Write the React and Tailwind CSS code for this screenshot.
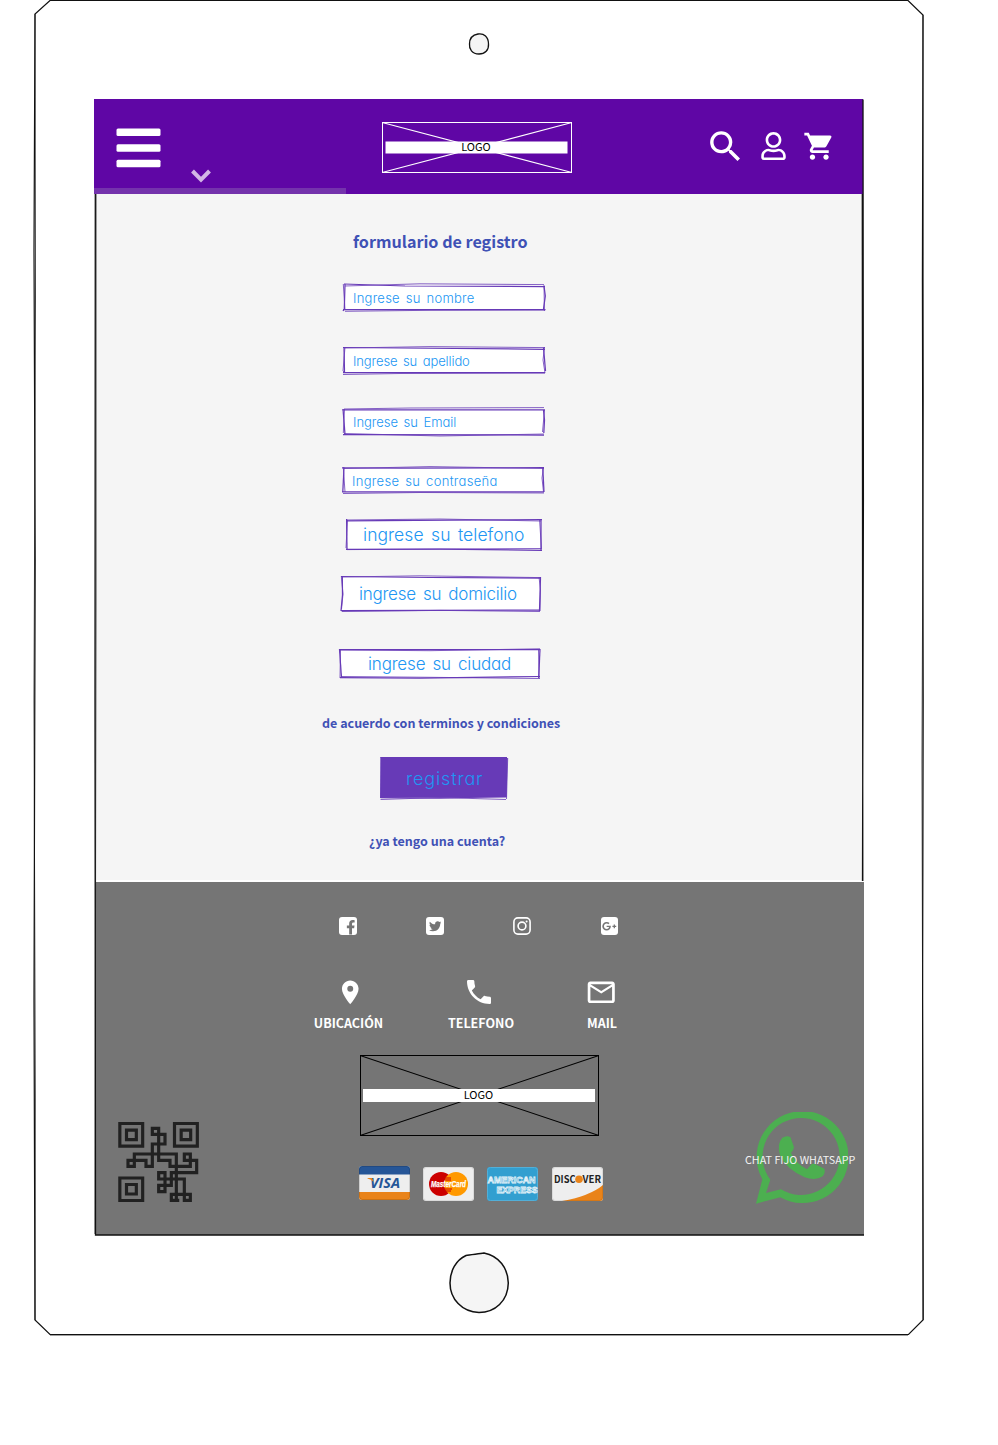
import React from "react";
import { MdSearch, MdShoppingCart, MdPlace, MdPhone, MdMailOutline } from "react-icons/md";
import { FaRegUser, FaTwitter, FaFacebookF, FaGooglePlusG } from "react-icons/fa";

const SANS = "font-['Noto_Sans_CJK_SC',sans-serif]";
const HAND = "font-['Inter',sans-serif] font-light [font-feature-settings:'cv11'] text-[#2196f3] whitespace-nowrap";

function DeviceFrame() {
  return (
    <svg className="pointer-events-none absolute inset-0" width="998" height="1445" viewBox="0 0 998 1445" fill="none" stroke="#111" strokeWidth="1.2">
      <path d="M50 0.5H908L923 15L922.4 280L923.2 700L922.6 1000L923 1320L908.500 1334.500H50L35 1320L34 1000L35.200 560L34 250L35 14Z" />
      <path d="M35 14L35.500 300L34 700L35.300 1100L35 1320M923 15L923.400 400L922 760L923.400 1320M50 1335H908" strokeWidth="0.8" />
      <path d="M95.300 194L95 700L95.500 1235H864" strokeWidth="1.3" />
      <path d="M96 194L96 600L95 1234" strokeWidth="0.8" />
      <path d="M863 99.500L863.400 500L862.500 881M862.300 194L862.800 881" strokeWidth="1.300" />
      <path d="M478 34C484 33 488.500 37 488.500 44C489 50 485 54 479 54C472 54 469 49 469.500 44C469.500 38 472 35 478 34Z" fill="#f5f5f5" strokeWidth="1.300" />
      <path d="M466 1255.500C470 1254.500 479 1254 484 1253C499 1256 508 1268 508.300 1283C508 1301 495 1312.500 479 1312.500C462 1312 450 1299 450 1283C450 1271 456 1260 466 1255.500Z" fill="#f5f5f5" strokeWidth="1.500" />
    </svg>
  );
}

function LogoBox({ width, height, color, bar, className }) {
  return (
    <div className={`relative shrink-0 self-start ${className}`}>
      <svg className="block" width={width} height={height} fill="none" stroke={color}>
        <rect x="0.5" y="0.5" width={width - 1} height={height - 1} />
        <path d={`M0 0.500L${width} ${height - 0.5}M0 ${height - 0.5}L${width} 0.500`} strokeWidth="1.1" />
        <rect x={bar[0]} y={bar[1]} width={bar[2]} height={bar[3]} fill="#fff" stroke="none" />
      </svg>
      <span className="absolute inset-0 flex items-center justify-center pr-[2px] pb-[3px] text-[11px] leading-none text-black">LOGO</span>
    </div>
  );
}

function Header() {
  return (
    <header className="relative flex h-[95px] w-[768.5px] bg-[#5f06a5]">
      <svg className="mt-[29px] ml-[22px]" width="45" height="40" viewBox="0 0 45 40" fill="#fff">
        <rect x="0.500" y="0.500" width="44" height="7.500" rx="1.500" />
        <rect x="0.500" y="16.300" width="44" height="7.500" rx="1.500" />
        <rect x="0.500" y="31.700" width="44" height="7.500" rx="1.500" />
      </svg>
      <svg className="mt-[70px] ml-[30px]" width="21" height="15" viewBox="0 0 21 15" fill="none" stroke="#d3b6e6" strokeWidth="4">
        <path d="M1.500 2L10 10.700L18.500 2" />
      </svg>
      <LogoBox width={190} height={51} color="#fff" bar={[3.5, 19.5, 182, 12]} className="mt-[23px] ml-[170px]" />
      <MdSearch className="mt-[26.500px] ml-[133px] shrink-0 text-white" size={41} />
      <FaRegUser className="mt-[33px] ml-[14.500px] h-[28px] w-[25px] shrink-0 text-white" />
      <MdShoppingCart className="mt-[31px] ml-[17.500px] shrink-0 text-white" size={32.5} />
      <div className="absolute bottom-0 left-0 h-[6px] w-[252px] bg-[#7433ac]" />
    </header>
  );
}

function Sketch({ box, fill, area, lines }) {
  return (
    <svg className="absolute inset-0 overflow-visible" width={box[2]} height={box[3]} viewBox={box.join(" ")} fill="none">
      <path d={area} fill={fill} />
      {lines.map((d, i) => (
        <path key={d} d={d} stroke="#673ab7" strokeWidth={i % 2 ? 0.8 : 1.25} />
      ))}
    </svg>
  );
}

function Field({ className, textClass, text, ...sketch }) {
  return (
    <div className={`relative flex items-center ${className}`}>
      <Sketch fill="#fff" {...sketch} />
      <span className={`relative ${HAND} ${textClass}`}>{text}</span>
    </div>
  );
}

function RegisterForm() {
  return (
    <main className="ml-[2px] flex h-[686px] w-[766px] flex-col items-start bg-[#f5f5f5]">
      <h1 className="mt-[35px] ml-[257px] h-[24px] text-[16.150px] leading-[24px] font-bold whitespace-nowrap text-[#3f51b5]">formulario de registro</h1>
      <Field
        className="mt-[31px] ml-[247px] h-[27px] w-[202px]"
        textClass="ml-[10px] mt-[2px] text-[13px] tracking-[0.250px] [word-spacing:2px]"
        text="Ingrese su nombre"
        box={[343, 284, 202, 27]}
        area="M344 285H545V309.500H344Z"
        lines={["M344 284L405 286L545 286.500", "M345 286L420 283.800L544 284.600", "M345 284L344.300 309L343 311", "M343.300 284L345 310", "M343 309.700H545.500", "M345 311.300L430 310.300L545 310", "M544 286L545.300 296L543.500 309", "M544 285L544.400 311"]}
      />
      <Field
        className="mt-[36px] ml-[247px] h-[27px] w-[202px]"
        textClass="ml-[10px] mt-[2px] text-[13px] tracking-[-0.100px] [word-spacing:2px]"
        text="Ingrese su apellido"
        box={[343, 347, 202, 27]}
        area="M344 348H545V373H344Z"
        lines={["M343 347.500L400 348L545 349.300", "M344 348L430 346.600L545 347.600", "M344 347L344.500 372.500", "M345 347L343 371L345 373", "M343 372.500H545", "M343 374.500L400 373.500L545 373", "M543.500 347.500L545.500 371", "M544.500 347L543 360L545 373"]}
      />
      <Field
        className="mt-[34px] ml-[247px] h-[27px] w-[202px]"
        textClass="ml-[10px] mt-[2px] text-[13px] tracking-[-0.030px] [word-spacing:2px]"
        text="Ingrese su Email"
        box={[343, 408, 202, 27]}
        area="M344 409.500H543.500V434H344Z"
        lines={["M342.500 409.800H545", "M344 409L410 408L544 407.600", "M343 409L345 434.500", "M344.500 409L343.300 433", "M343 434.500L544 435", "M344 433.500L440 436L544 434", "M543.500 410L544.500 420L543.800 433", "M544.500 410L542.500 432"]}
      />
      <Field
        className="mt-[32px] ml-[246px] h-[26px] w-[202px]"
        textClass="ml-[10px] mt-[3px] text-[13px] tracking-[0.300px] [word-spacing:2px]"
        text="Ingrese su contraseña"
        box={[342, 467, 202, 26]}
        area="M343.500 468H543V492H343.500Z"
        lines={["M342 467.800L400 468.200L544 467.700", "M344 468.500L430 466.600L544 468.500", "M344 467.500L342.800 492", "M343.300 467L345 492", "M342 491.800H544", "M343 493.500L420 492.500L544 493", "M542.800 468L544 492", "M543.500 467L542 478L543.500 492"]}
      />
      <Field
        className="mt-[26px] ml-[250px] h-[31px] w-[195px]"
        textClass="ml-[17px] mt-[2px] text-[17.500px] tracking-[0.050px] [word-spacing:2.500px]"
        text="ingrese su telefono"
        box={[346, 519, 195, 31]}
        area="M347 520H541V549H347Z"
        lines={["M346 520.800L450 520L542 519.700", "M346 520L440 519L541 521", "M346.600 519L347 549", "M347.500 520L346 548", "M346 549.300L440 549L542 550.300", "M347 549.600L541 548.500", "M541 519L541 550", "M539.500 519L541.500 549"]}
      />
      <Field
        className="mt-[26px] ml-[245px] h-[35px] w-[200px]"
        textClass="ml-[18px] mt-[3px] text-[17px] tracking-[-0.230px] [word-spacing:2.500px]"
        text="ingrese su domicilio"
        box={[341, 576, 200, 35]}
        area="M342 577H540V611H342Z"
        lines={["M341 576.500L430 577.500L541 578", "M342 577L420 575.800L541 577.600", "M342.300 576L342.500 595L341 611", "M341.300 576L343 594L341.500 609", "M341 610.500L540 610", "M342 611.500L440 610.400L540 611.500", "M540.500 577L539.500 611", "M539 577L540.500 590L540 611"]}
      />
      <Field
        className="mt-[38px] ml-[243px] h-[30px] w-[201px]"
        textClass="ml-[29px] mt-px text-[17px] tracking-[-0.170px] [word-spacing:2.500px]"
        text="ingrese su ciudad"
        box={[339, 649, 201, 30]}
        area="M340.500 650H539V678H340.500Z"
        lines={["M340 649.600H540", "M340 650L430 650.700L540 648.800", "M339.500 649L341.500 678", "M340.500 649L340 678", "M340 677.500L420 678L540 676.500", "M341 676.500L430 677.300L540 678.500", "M540 649L538.700 678", "M538.500 649L539 678"]}
      />
      <p className="mt-[34px] ml-[226px] h-[20px] text-[12.500px] leading-[20px] font-bold whitespace-nowrap text-[#3f51b5]">de acuerdo con terminos y condiciones</p>
      <button className="relative mt-[24px] ml-[284px] flex h-[42px] w-[128px] items-center">
        <Sketch
          box={[380, 757, 128, 42]}
          fill="#673ab7"
          area="M380.500 757H507L506.500 797.500H380.500Z"
          lines={["M381.300 757L380.700 798", "M380.500 757.500H507", "M507 758L506 797", "M507.700 758L506.500 799", "M380.500 797.500L440 798L506 796.500", "M380.500 799.500L440 797.500L506 799.500"]}
        />
        <span className={`relative ml-[26px] text-[18px] tracking-[0.850px] ${HAND}`}>registrar</span>
      </button>
      <p className="mt-[32px] ml-[273px] h-[20px] text-[12.500px] leading-[20px] font-bold whitespace-nowrap text-[#3f51b5]">¿ya tengo una cuenta?</p>
    </main>
  );
}

function SocialTile({ children }) {
  return <div className="flex h-[17.500px] w-[17.500px] items-center justify-center rounded-[3px] bg-white text-[#757575]">{children}</div>;
}

function Contact({ icon, label, className }) {
  return (
    <div className={`flex flex-col items-center ${className}`}>
      <div className="flex h-[32px] items-center">{icon}</div>
      <span className="mt-[5px] text-[12.500px] leading-[20px] font-bold whitespace-nowrap">{label}</span>
    </div>
  );
}

function QrCode() {
  return (
    <svg width="81" height="80" viewBox="114 66 243 240" fill="none" stroke="#212121" strokeWidth="9.500">
      <path d="M119.500 70.500H188V138.500H119.500ZM139.500 90.500H169V119H139.500ZM283.500 70.500H352V138.500H283.500ZM303.500 90.500H332V119H303.500ZM119.500 234H188V301.500H119.500ZM139.500 253.500H169V282H139.500Z" />
      <path d="M217 85H236V103H217ZM236 103H255V132H217V199H198V181H163V162H289V301M144 181H163V199H144ZM236 85V181H270V199H331V162H313V181H350V218H274V256H236V275H255V218H236V237H313V301H331V283H274V301H293" strokeLinecap="square" />
    </svg>
  );
}

function Whatsapp() {
  return (
    <div className="relative flex h-[92px] w-[110px] items-center justify-center">
      <svg className="ml-[3px] shrink-0" width="92" height="92" viewBox="79 65 276 276" fill="#4caf50">
        <path fillRule="evenodd" d="M79 340L98 267A138 138 0 1 1 152 321ZM109 308L122 268A115.500 115.500 0 1 1 154 297Z" />
        <path d="M158 142Q171 134 182 140L193 171Q192 180 184 188Q200 221 232 237L246 221Q252 219 260 223L284 235Q288 247 279 258Q258 272 225 261Q169 236 151 195Q141 160 158 142Z" />
      </svg>
      <span className="absolute top-[39px] left-0 text-[10.750px] leading-[18px] whitespace-nowrap text-[#f2f2f2]">CHAT FIJO WHATSAPP</span>
    </div>
  );
}

function Cards() {
  return (
    <div className="flex gap-[13.200px] [&>svg]:overflow-visible">
      <svg className="-mt-px" width="51" height="34" viewBox="0 0 51 34">
        <rect width="51" height="34" rx="3" fill="#eee" />
        <path d="M0 8.500V3Q0 0 3 0H48Q51 0 51 3V8.500Z" fill="#265697" />
        <path d="M0 26V31Q0 34 3 34H48Q51 34 51 31V26Z" fill="#e98319" />
        <text x="11" y="22" fontSize="14.500" fontWeight="700" fontStyle="italic" fontFamily="Open Sans, sans-serif" fill="#265697" textLength="30" lengthAdjust="spacingAndGlyphs">VISA</text>
        <path d="M8.500 12H13L15 16Q12 13 8.500 12.500Z" fill="#e98319" />
        <rect x="0.5" y="0.5" width="50" height="33" rx="3" fill="none" stroke="#000" strokeOpacity="0.130" />
      </svg>
      <svg width="51" height="34" viewBox="0 0 51 34">
        <rect width="51" height="34" rx="3" fill="#eee" />
        <circle cx="18" cy="17" r="12" fill="#c00" />
        <circle cx="33" cy="17" r="12" fill="#f90" />
        <path d="M22 11H28M21.500 13H28M21.500 22H29M22 24H28" stroke="#c00" strokeWidth="1" />
        <text x="8" y="20" fontSize="8.500" fontWeight="700" fontStyle="italic" fontFamily="Liberation Sans, sans-serif" fill="#fff" stroke="#fff" strokeWidth="0.250" textLength="35" lengthAdjust="spacingAndGlyphs">MasterCard</text>
        <rect x="0.5" y="0.5" width="50" height="33" rx="3" fill="none" stroke="#000" strokeOpacity="0.080" />
      </svg>
      <svg width="51" height="34" viewBox="0 0 51 34">
        <rect width="51" height="34" rx="3" fill="#329fd0" />
        <rect x="0.5" y="0.5" width="50" height="33" rx="3" fill="none" stroke="#52afd8" />
        <g fontSize="9.800" fontWeight="700" fontFamily="Liberation Sans, sans-serif" fill="#329fd0" stroke="#e6f3f9" strokeWidth="0.8">
          <text x="0.5" y="15.500" textLength="48" lengthAdjust="spacingAndGlyphs">AMERICAN</text>
          <text x="9.500" y="25.500" textLength="41" lengthAdjust="spacingAndGlyphs">EXPRESS</text>
        </g>
      </svg>
      <svg width="51" height="34" viewBox="0 0 51 34">
        <rect width="51" height="34" rx="3" fill="#eee" />
        <path d="M10 34Q38 29 51 18V31Q51 34 48 34Z" fill="#e98319" />
        <g fontSize="10.500" fontWeight="700" fontFamily="Noto Sans CJK SC, sans-serif" fill="#222">
          <text x="2" y="16" textLength="21.500" lengthAdjust="spacingAndGlyphs">DISC</text>
          <text x="30.500" y="16" textLength="18.500" lengthAdjust="spacingAndGlyphs">VER</text>
        </g>
        <circle cx="27" cy="12.300" r="3.800" fill="#e98319" />
        <rect x="0.5" y="0.5" width="50" height="33" rx="3" fill="none" stroke="#000" strokeOpacity="0.080" />
      </svg>
    </div>
  );
}

function Footer() {
  return (
    <footer className="mt-[2px] ml-[2px] flex h-[353px] w-[768px] flex-col bg-[#757575] text-white">
      <div className="mt-[35px] ml-[243px] flex h-[18px] gap-[69.500px]">
        <SocialTile>
          <FaFacebookF className="mt-[3px] ml-[5px] h-[14.500px] w-[9.500px]" />
        </SocialTile>
        <SocialTile>
          <FaTwitter size={12.5} />
        </SocialTile>
        <svg width="18" height="18" viewBox="0 0 18 18" fill="none" stroke="#fff" strokeWidth="1.600">
          <rect x="0.900" y="0.900" width="16.200" height="16.200" rx="4" />
          <circle cx="9" cy="9" r="3.900" />
          <circle cx="13.600" cy="4.400" r="1" fill="#fff" stroke="none" />
        </svg>
        <SocialTile>
          <FaGooglePlusG size={14.5} />
        </SocialTile>
      </div>
      <div className="mt-[41px] flex">
        <Contact className="ml-[218px] w-[69px]" icon={<MdPlace className="ml-[4px]" size={28.5} />} label="UBICACIÓN" />
        <Contact className="ml-[64px] w-[68px]" icon={<MdPhone className="-ml-[4px]" size={32} />} label="TELEFONO" />
        <Contact className="ml-[71px] w-[32px]" icon={<MdMailOutline className="-ml-[2px] shrink-0" size={32.500} />} label="MAIL" />
      </div>
      <div className="flex">
        <div className="mt-[89px] ml-[22px] h-[80px] w-[81px]">
          <QrCode />
        </div>
        <div className="mt-[22px] ml-[161px] flex w-[244px] flex-col">
          <LogoBox width={239} height={81} color="#000" bar={[3, 34, 232, 13]} className="mb-[31px]" />
          <div className="-ml-px">
            <Cards />
          </div>
        </div>
        <div className="mt-[79px] ml-[141px]">
          <Whatsapp />
        </div>
      </div>
    </footer>
  );
}

export default function App() {
  return (
    <div className={`relative h-[1445px] w-[998px] overflow-hidden bg-white ${SANS}`}>
      <div className="flex w-[770px] flex-col pt-[99px] ml-[94px]">
        <Header />
        <RegisterForm />
        <Footer />
      </div>
      <DeviceFrame />
    </div>
  );
}
